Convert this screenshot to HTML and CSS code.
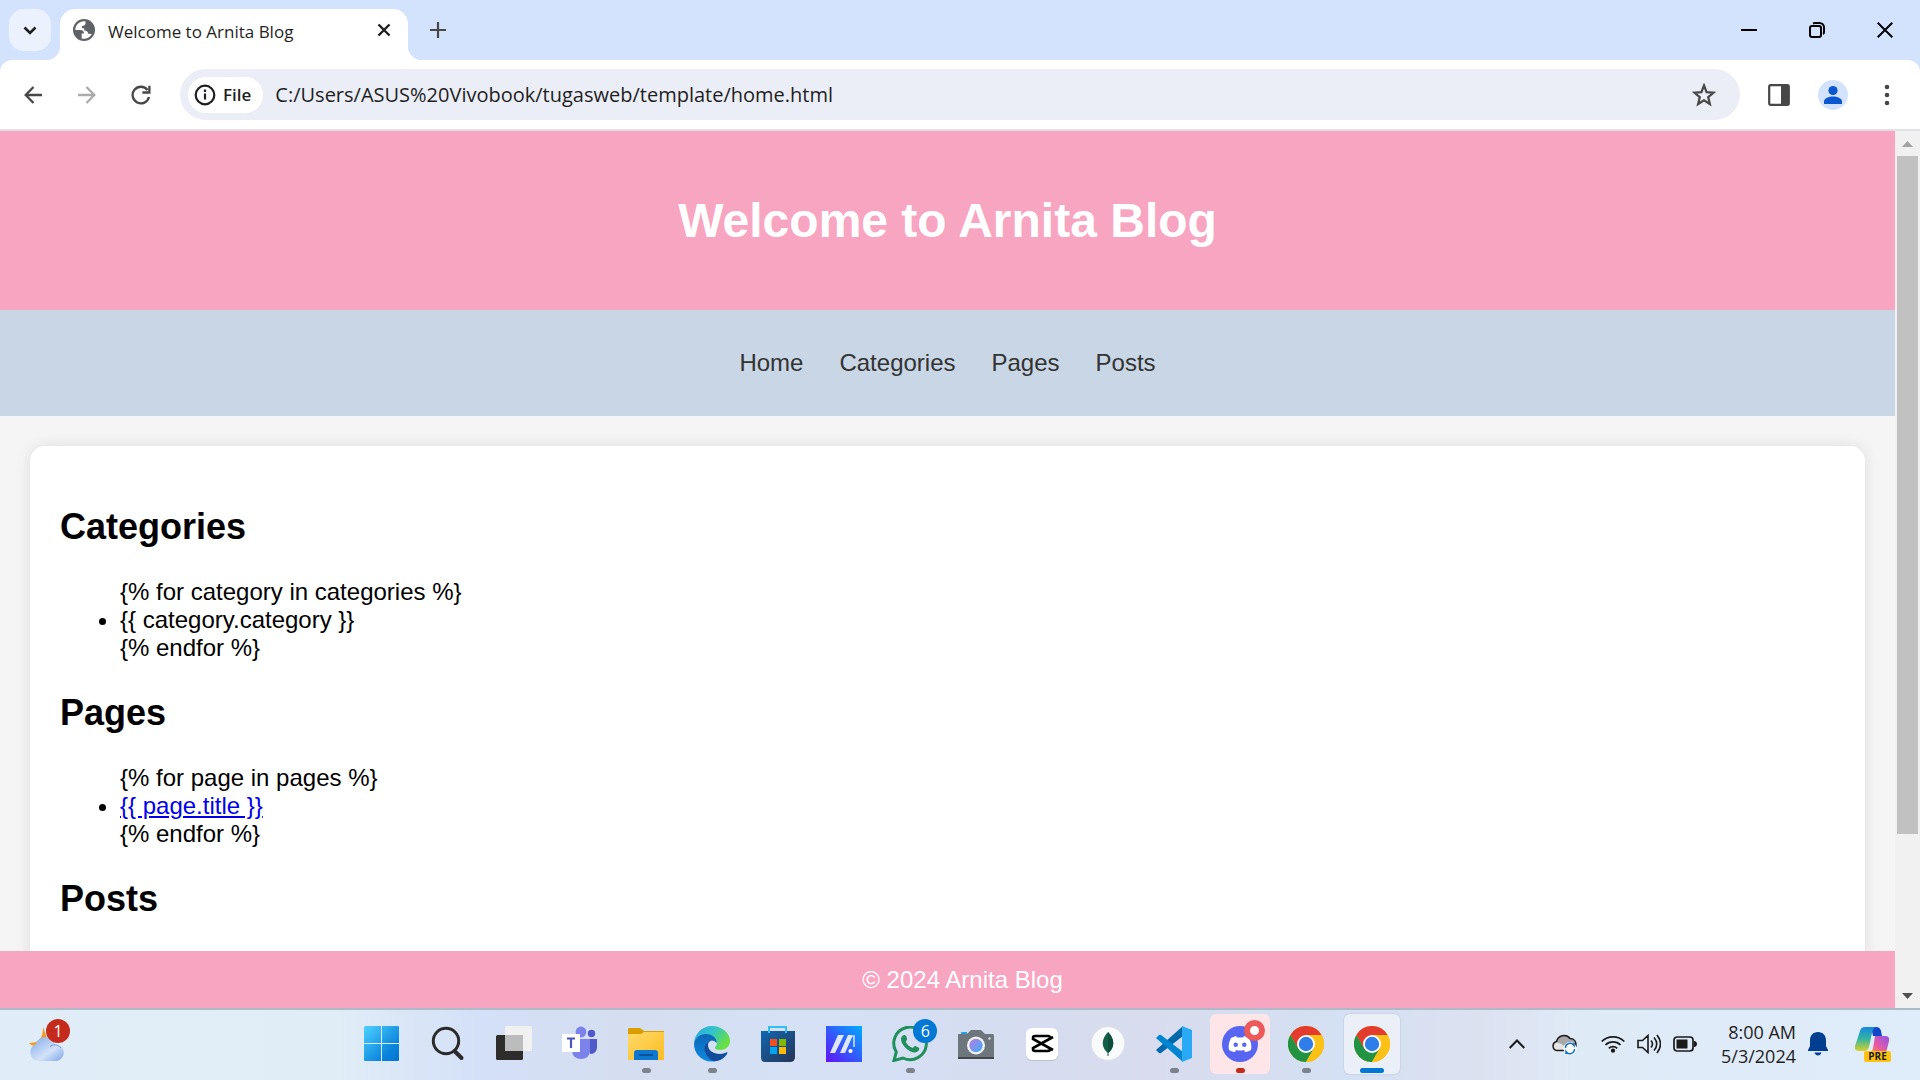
FILE: index.html
```html
<!DOCTYPE html>
<html lang="en">
<head>
<meta charset="utf-8">
<meta name="viewport" content="width=device-width, initial-scale=1">
<title>Welcome to Arnita Blog</title>
<link rel="stylesheet" href="styles.css">
</head>
<body>
<div class="tabstrip">
  <button class="tab-search" aria-label="Search tabs"><svg width="14" height="9" viewBox="0 0 14 9"><path d="M1.500 1.500 7 7l5.500-5.500" fill="none" stroke="#1f1f1f" stroke-width="2.600"/></svg></button>
  <div class="tab">
    <svg width="22" height="22" viewBox="0 0 22 22"><circle cx="11" cy="11" r="11" fill="#5f6368"/><path d="M12.500 2.400C7 1.600 2.400 5.700 2.300 11h5.200c2.200 0 3.600 1.300 3.600 3.400h-2.400v5c4 1 8.300-.8 10.100-4.500l-3.600-.2c-.2-2.300-1.700-3.100-4-3.100V9.200H8.900V6.900c2 0 3.400-.7 3.600-2.300z" fill="#fff"/><path d="M14.500 3.200c0 2.300.2 3.600-1.400 4.300v1.800c2.400.2 3.300 1.300 3.700 2.900h2.800c.5-3.900-1.600-7.600-5.100-9z" fill="#5f6368"/></svg>
    <span class="tab-title">Welcome to Arnita Blog</span>
    <button class="plain tab-close" aria-label="Close tab"><svg width="14" height="14" viewBox="0 0 14 14"><path d="m1.500 1.500 11 11m0-11-11 11" stroke="#1f1f1f" stroke-width="2.400"/></svg></button>
  </div>
  <button class="plain new-tab" aria-label="New tab"><svg width="16" height="16" viewBox="0 0 16 16"><path d="M8 0v16M0 8h16" stroke="#474747" stroke-width="2.200"/></svg></button>
  <div class="window-controls">
    <button class="plain" aria-label="Minimize"><svg width="16" height="16" viewBox="0 0 16 16"><path d="M0 8h16" stroke="#000" stroke-width="2"/></svg></button>
    <button class="plain" aria-label="Restore"><svg width="16" height="16" viewBox="0 0 16 16" fill="none" stroke="#000" stroke-width="2"><rect x="1" y="4" width="11" height="11" rx="2"/><path d="M4 1.500C5 1 5 1 6 1h4.500A4.500 4.500 0 0 1 15 5.500V10c0 1 0 1.500-1 2"/></svg></button>
    <button class="plain" aria-label="Close"><svg width="16" height="16" viewBox="0 0 16 16"><path d="m.700.700 14.600 14.600m0-14.600L.700 15.300" stroke="#000" stroke-width="2"/></svg></button>
  </div>
</div>

<div class="toolbar">
  <button class="plain tool" aria-label="Back"><svg width="18" height="18" viewBox="0 0 18 18" fill="none" stroke="#474747" stroke-width="2.300"><path d="M9.500 1 1.700 9l7.800 8M1.700 9H18"/></svg></button>
  <button class="plain tool" aria-label="Forward"><svg width="18" height="18" viewBox="0 0 18 18" fill="none" stroke="#ababab" stroke-width="2.300"><path d="m8.500 1 7.800 8-7.800 8M16.300 9H0"/></svg></button>
  <button class="plain tool" aria-label="Reload"><svg width="20" height="20" viewBox="0 0 20 20" fill="none" stroke="#474747" stroke-width="2.300"><path d="M16.500 5A8.300 8.300 0 1 0 18 12M18.400.700v6.800h-7"/></svg></button>
  <div class="omnibox">
    <button class="site-chip"><svg width="22" height="22" viewBox="0 0 22 22"><circle cx="11" cy="11" r="9.300" fill="none" stroke="#1f1f1f" stroke-width="2.200"/><path d="M11 9.500v6M11 5.500v2.400" stroke="#1f1f1f" stroke-width="2.200"/></svg>File</button>
    <input class="address" type="text" aria-label="Address" value="C:/Users/ASUS%20Vivobook/tugasweb/template/home.html">
    <button class="plain star" aria-label="Bookmark this page"><svg width="24" height="24" viewBox="0 0 24 24"><path d="m12 2.500 2.600 6.600 7 .5-5.400 4.500 1.700 6.900-5.900-3.700L6.100 21l1.700-6.900-5.400-4.500 7-.5z" fill="none" stroke="#474747" stroke-width="2.200"/></svg></button>
  </div>
  <button class="plain tool" aria-label="Side panel"><svg width="22" height="22" viewBox="0 0 22 22"><rect x="1.200" y="1.200" width="19.600" height="19.600" rx="1.500" fill="#fff" stroke="#474747" stroke-width="2.200"/><path d="M13 1h8v20h-8z" fill="#474747"/></svg></button>
  <button class="plain tool" aria-label="Profile"><svg width="30" height="30" viewBox="0 0 30 30"><circle cx="15" cy="15" r="15" fill="#d3e3fd"/><circle cx="15" cy="10.500" r="4.600" fill="#0b57d0"/><path d="M6 24v-2.500c0-3.200 5-5 9-5s9 1.800 9 5V24z" fill="#0b57d0"/></svg></button>
  <button class="plain tool" aria-label="Menu"><svg width="6" height="22" viewBox="0 0 6 22" fill="#474747"><circle cx="3" cy="3" r="2.300"/><circle cx="3" cy="11" r="2.300"/><circle cx="3" cy="19" r="2.300"/></svg></button>
</div>

<div class="viewport">
  <div class="blog">
    <header class="blog-header"><h1>Welcome to Arnita Blog</h1></header>
    <nav class="blog-nav">
      <a href="#home">Home</a>
      <a href="#categories">Categories</a>
      <a href="#pages">Pages</a>
      <a href="#posts">Posts</a>
    </nav>
    <main class="blog-body">
      <div class="card">
        <h2 id="categories">Categories</h2>
        <ul>
          {% for category in categories %}
          <li>{{ category.category }}</li>
          {% endfor %}
        </ul>
        <h2 id="pages">Pages</h2>
        <ul>
          {% for page in pages %}
          <li><a href="#page">{{ page.title }}</a></li>
          {% endfor %}
        </ul>
        <h2 id="posts">Posts</h2>
      </div>
    </main>
    <footer class="blog-footer">© 2024 Arnita Blog</footer>
  </div>
  <div class="scrollbar">
    <svg width="25" height="25" viewBox="0 0 25 25"><path d="m12.500 10 5.500 6H7z" fill="#a3a3a3"/></svg>
    <div class="track"><div class="thumb"></div></div>
    <svg width="25" height="25" viewBox="0 0 25 25"><path d="m12.500 16 5.500-6H7z" fill="#505050"/></svg>
  </div>
</div>

<div class="taskbar">
  <div class="widgets">
    <button class="plain weather" aria-label="Weather"><svg width="38" height="34" viewBox="0 0 38 34"><defs><linearGradient id="cl" x1="0" y1="0" x2="1" y2="1"><stop offset="0" stop-color="#7fa9ea"/><stop offset=".6" stop-color="#d3e2f8"/><stop offset="1" stop-color="#7ba4e8"/></linearGradient></defs><path d="M15 0c0 12-4 16-14 16 4 5 15 5 20 0z" fill="#f39a1e"/><path d="M9 34a9 9 0 0 1-1-17 10 10 0 0 1 19 0 8.600 8.600 0 0 1 2 17z" fill="url(#cl)"/><path d="M22 20c2-3 8-3 11 1" stroke="#6f99df" fill="none"/></svg><span class="badge alert">1</span></button>
  </div>
  <div class="apps">
    <button class="app" aria-label="Start"><svg width="36" height="36" viewBox="0 0 36 36"><defs><linearGradient id="win" x1="0" y1="0" x2="1" y2="1"><stop offset="0" stop-color="#4fd2ff"/><stop offset=".7" stop-color="#0c86dc"/><stop offset="1" stop-color="#0071d1"/></linearGradient></defs><path d="M1 0h16v17H0V1zM18 0h16q1 0 1 1v16H18zM0 18h17v17H1q-1 0-1-1zM18 18h17v16q0 1-1 1H18z" fill="url(#win)"/></svg></button>
    <button class="app" aria-label="Search"><svg width="36" height="36" viewBox="0 0 36 36" fill="none" stroke="#2b2b2b"><circle cx="16" cy="15" r="12.700" stroke-width="3"/><path d="m24.500 25 7 7" stroke-width="4" stroke-linecap="round"/></svg></button>
    <button class="app" aria-label="Task view"><svg width="36" height="36" viewBox="0 0 36 36"><rect x="0" y="9" width="27" height="25" rx="1.500" fill="#2e2d2c"/><rect x="9" y="0" width="27" height="25" rx="1.500" fill="#f1f1f1"/><path d="M9 9h18v16H9z" fill="#bcbcbc"/></svg></button>
    <button class="app" aria-label="Teams"><svg width="36" height="36" viewBox="0 0 36 36"><circle cx="19" cy="6" r="5.400" fill="#7b83eb"/><circle cx="29.500" cy="7.500" r="3.700" fill="#5059c9"/><path d="M24 13h11v9q-1 6-7 6z" fill="#5059c9"/><path d="M12 13h16v12q-1 8-9 8t-9-8z" fill="#7b83eb"/><path d="M0 8h18v18H0z" fill="#fff"/><path d="M5 12.500h8M9 12.500V22" stroke="#4b53bc" stroke-width="2.200"/></svg></button>
    <button class="app running" aria-label="File Explorer"><svg width="36" height="36" viewBox="0 0 36 36"><defs><linearGradient id="fo" x1="0" y1="0" x2="1" y2="1"><stop offset="0" stop-color="#ffda69"/><stop offset="1" stop-color="#fcbc23"/></linearGradient></defs><path d="M0 3q0-1 1-1h11l4 3h20v10H0z" fill="#dc9d00"/><path d="M0 8h13l3-2h20v28H0z" fill="url(#fo)"/><path d="M6 34v-7q0-3 3-3h18q3 0 3 3v7z" fill="#0c78d0"/><path d="M11 29h14" stroke="#0c529a" stroke-width="2"/></svg></button>
    <button class="app running" aria-label="Edge"><svg width="36" height="36" viewBox="0 0 36 36"><defs><linearGradient id="ed" x1="0" y1="0" x2="1" y2=".5"><stop offset="0" stop-color="#2ca3df"/><stop offset=".5" stop-color="#31c3cd"/><stop offset="1" stop-color="#69e040"/></linearGradient><linearGradient id="ee" x1="0" y1="0" x2="0" y2="1"><stop offset="0" stop-color="#0c65b6"/><stop offset="1" stop-color="#0c8be2"/></linearGradient></defs><path d="M0 18C0 8 8 0 18 0s18 7 18 15c0 6-5 9-10 9-3 0-5-1-5-2 0-2 2-2 2-5 0-4-4-7-9-7C7 10 1 13 0 18z" fill="url(#ed)"/><path d="M0 18C1 12 6 8 12 8c6 0 11 4 11 9l-3-2c-4-2-9 2-9 8 0 7 5 11 11 12-13 3-22-7-22-17z" fill="url(#ee)"/><path d="M18 14c-5 1-9 6-7 12s7 10 12 9c5-1 8-4 10-7 1-2 0-2-2-1-8 3-17-1-17-8 0-2 1-4 4-5z" fill="#114d9d"/></svg></button>
    <button class="app" aria-label="Microsoft Store"><svg width="36" height="36" viewBox="0 0 36 36"><defs><linearGradient id="st" x1="0" y1="0" x2="1" y2="1"><stop offset="0" stop-color="#0f67b4"/><stop offset="1" stop-color="#283455"/></linearGradient></defs><path d="M1 5h34v26q0 5-5 5H5q-4 0-4-5z" fill="url(#st)"/><path d="M9 7V1h17v6" fill="none" stroke="#33bff2" stroke-width="2"/><path d="M10 13h7v7h-7z" fill="#f25022"/><path d="M19 13h7v7h-7z" fill="#7fba00"/><path d="M10 21h7v7h-7z" fill="#00a4ef"/><path d="M19 21h7v7h-7z" fill="#ffb900"/></svg></button>
    <button class="app" aria-label="MyASUS"><svg width="36" height="36" viewBox="0 0 36 36"><defs><linearGradient id="as" x1="0" y1="1" x2="1" y2="0"><stop offset="0" stop-color="#6313f5"/><stop offset=".5" stop-color="#315cff"/><stop offset="1" stop-color="#00adff"/></linearGradient></defs><path d="M0 0h36v36H0z" fill="url(#as)"/><path d="M12 9h6L9 27H4zM22 9h5l-8 18h-5z" fill="#dfe6ff"/><path d="M25 9h4v12h-2v-9z" fill="#a8c8ff"/><circle cx="24.500" cy="25" r="2.100" fill="#fff"/></svg></button>
    <button class="app running" aria-label="WhatsApp"><svg width="36" height="36" viewBox="0 0 36 36"><path d="M2 34.500 4.300 26A16.300 16.300 0 1 1 11 32z" fill="none" stroke="#1f8f5b" stroke-width="3"/><path d="M11 9.500c2-1 3 0 3.500 1.500 1 2.600.5 3-.8 4.800 1.700 3.200 4 5.200 7 6.200 1.600-1.500 2-2.400 3.600-1.600 3 1.400 3.400 1.600 2.700 3.400-1 2.500-4 3-6 2.500C15 24.800 9 18 9 13c0-1.500.8-2.800 2-3.500z" fill="#1f8f5b"/></svg><span class="badge count">6</span></button>
    <button class="app" aria-label="Camera"><svg width="36" height="36" viewBox="0 0 36 36"><defs><linearGradient id="ca" x1="0" y1="0" x2="1" y2="1"><stop offset="0" stop-color="#b87be5"/><stop offset="1" stop-color="#3cb0f5"/></linearGradient></defs><path d="M3 8V7q0-1 1-1h5v3z" fill="#27a0e0"/><path d="M0 8h9l4-4h10l4 4h8q1 0 1 2v23H0z" fill="#6e767d"/><path d="M0 31h36v2H0z" fill="#42474c"/><circle cx="18" cy="19.500" r="9" fill="#f4f4f4"/><circle cx="18" cy="19.500" r="6.700" fill="url(#ca)"/><circle cx="31.500" cy="12.500" r="1.200" fill="#d6dadd"/></svg></button>
    <button class="app" aria-label="CapCut"><svg width="36" height="36" viewBox="0 0 36 36"><rect x="2" y="3" width="32" height="32" rx="6" fill="#a9afb9" opacity=".6"/><rect x="2" y="2" width="32" height="32" rx="6" fill="#fff"/><path d="M29 11 9 22v1q0 2 2 2h13q2 0 2-2M29 24 9 13v-1q0-2 2-2h13q2 0 2 2" fill="none" stroke="#000" stroke-width="2.600"/></svg></button>
    <button class="app" aria-label="MongoDB Compass"><svg width="36" height="36" viewBox="0 0 36 36"><circle cx="18" cy="17.500" r="16.700" fill="#f9fbfa" stroke="#e1e4e8"/><path d="M18 6c7 7 7 16 0 21-7-5-7-14 0-21z" fill="#116149"/><path d="M18 6c7 7 7 16 0 21z" fill="#0d4f3c"/><path d="M18 25v5" stroke="#116149"/></svg></button>
    <button class="app running" aria-label="Visual Studio Code"><svg width="36" height="36" viewBox="0 0 36 36"><path d="m0 24 3 3q1 .500 2 0L27 10V0z" fill="#0069ac"/><path d="m0 12 3-3q1-.500 2 0l22 17v10z" fill="#0086d1"/><path d="M26 0 36 4v28l-10 4z" fill="#2aa9f4"/></svg></button>
    <button class="app tile-alert running" aria-label="Discord"><svg width="36" height="36" viewBox="0 0 36 36"><circle cx="18" cy="18" r="18" fill="#5865f2"/><path d="m14 10-5 2c-2 4-3 8-2 12 2 1 4 2 6 2l1-2c3 .700 5 .700 8 0l1 2c2 0 4-1 6-2 1-4 0-8-2-12l-5-2-1 1.500h-6z" fill="#fff"/><circle cx="13.700" cy="18.700" r="2.200" fill="#5865f2"/><circle cx="22.300" cy="18.700" r="2.200" fill="#5865f2"/></svg><span class="badge dot"></span></button>
    <button class="app running" aria-label="Chrome"><svg width="36" height="36" viewBox="0 0 36 36"><g id="chrome"><circle cx="18" cy="18" r="18" fill="#fbc116"/><path d="M2.400 9A18 18 0 0 1 33.600 9H18l-8 13.500z" fill="#e33b2e"/><path d="M2.400 9A18 18 0 0 0 18 36l7.800-13.500-15.600 0z" fill="#229342"/><path d="M18 9h15.600A18 18 0 0 1 18 36l7.800-13.500z" fill="#fbc116"/><circle cx="18" cy="18" r="9" fill="#fff"/><circle cx="18" cy="18" r="7.200" fill="#2f7de9"/></g></svg></button>
    <button class="app tile-active running" aria-label="Chrome, active window"><svg width="36" height="36" viewBox="0 0 36 36"><use href="#chrome"/></svg></button>
  </div>
  <div class="tray">
    <button class="plain overflow" aria-label="Hidden icons"><svg width="16" height="10" viewBox="0 0 16 10"><path d="m.700 9 7.300-7.500L15.300 9" fill="none" stroke="#1b1b1b" stroke-width="2"/></svg></button>
    <button class="plain cloud" aria-label="OneDrive"><svg width="25" height="21" viewBox="0 0 25 21"><path d="M5 16.500A4.600 4.600 0 0 1 4.500 7.500 7.700 7.700 0 0 1 18 4.500c4 0 6 3 6 6s-2 6-5 6z" fill="#a8a8a8" stroke="#1b1b1b" stroke-width="1.500"/><path d="M5 15.500c-4 0-4-6 0-7 3 0 9 4 10 7z" fill="#e4e4e4"/><circle cx="18" cy="14.500" r="6.500" fill="#fff"/><path d="M13.500 14a4.600 4.600 0 0 1 8.500-2.500V9M22.500 15a4.600 4.600 0 0 1-8.500 2.500V20" fill="none" stroke="#0f73c9" stroke-width="1.500"/></svg></button>
    <button class="plain status" aria-label="Network, volume and battery">
      <svg width="24" height="18" viewBox="0 0 24 18" fill="none" stroke="#1b1b1b" stroke-width="1.700"><path d="M.700 6.500a16 16 0 0 1 22.600 0M4.500 10a10.700 10.700 0 0 1 15 0M7.800 13.300a6 6 0 0 1 8.400 0"/><circle cx="12" cy="15.700" r="1.300" fill="#1b1b1b"/></svg>
      <svg width="24" height="20" viewBox="0 0 24 20" fill="none" stroke="#1b1b1b" stroke-width="1.600"><path d="M1 6.500h4.500L11 1.500v17l-5.500-5H1zM14 6.500q3 3.500 0 7M17 3.500q5.500 6.500 0 13M20 1q7 9 0 18"/></svg>
      <svg width="24" height="16" viewBox="0 0 24 16"><rect x="1" y="1" width="19" height="14" rx="3" fill="none" stroke="#1b1b1b" stroke-width="1.700"/><path d="M3.500 3.500h11v9h-11z" fill="#1b1b1b"/><path d="M21 5c4 0 4 6 0 6z" fill="#1b1b1b"/></svg>
    </button>
    <button class="plain clock"><span>8:00 AM</span><span>5/3/2024</span></button>
    <button class="plain bell" aria-label="Notifications"><svg width="20" height="24" viewBox="0 0 20 24" fill="#003e92"><path d="M10 0c5 0 8 3.500 8 8.500V14l2 4v1H0v-1l2-4V8.500C2 3.500 5 0 10 0zM6.500 20.500h7q-1 3-3.500 3t-3.500-3z"/></svg></button>
    <button class="plain copilot" aria-label="Copilot"><svg width="35" height="34" viewBox="0 0 35 34"><defs><linearGradient id="co" x1="0" y1="0" x2="0" y2="1"><stop offset="0" stop-color="#1687e0"/><stop offset=".5" stop-color="#35b5a0"/><stop offset="1" stop-color="#d9cf28"/></linearGradient><linearGradient id="cp" x1="1" y1="0" x2="0" y2="1"><stop offset="0" stop-color="#8c53f0"/><stop offset=".6" stop-color="#ee5a9b"/><stop offset="1" stop-color="#f5a04c"/></linearGradient></defs><path d="M16 0h5q4 0 5 4l1 5h-9z" fill="#1246c8"/><path d="M10 0h11q-3 1-4 6l-3 14q-1 4-5 4H4q-5 0-4-5L5 4q1-4 5-4z" fill="url(#co)"/><path d="M20 9h10q5 0 4 5l-2 8q-1 5-6 5H14q3-1 4-6z" fill="url(#cp)"/></svg><span class="pre">PRE</span></button>
  </div>
</div>
</body>
</html>
```
FILE: styles.css
```css
* {
  box-sizing: border-box;
}

body {
  margin: 0;
  height: 100vh;
  display: flex;
  flex-direction: column;
  overflow: hidden;
  background: #d3e3fd;
  font-family: "Open Sans", "Noto Sans", sans-serif;
  color: #1f1f1f;
}

button {
  font: inherit;
  color: inherit;
}

svg {
  display: block;
  flex: none;
}

.plain,
.app {
  position: relative;
  display: flex;
  align-items: center;
  justify-content: center;
  padding: 0;
  border: 0;
  background: none;
}

/* Tab strip */
.tabstrip {
  display: flex;
  height: 60px;
  flex: none;
  padding: 9px 1px 0 9px;
}

.tab-search {
  display: flex;
  align-items: center;
  justify-content: center;
  width: 42px;
  height: 42px;
  padding: 0;
  border: 0;
  border-radius: 15px;
  background: #ebf2fe;
}

.tab {
  position: relative;
  display: flex;
  align-items: center;
  gap: 13px;
  width: 348px;
  margin-left: 9px;
  padding: 0 17px 9px 13px;
  border-radius: 15px 15px 0 0;
  background: #fff;
}

.tab::before,
.tab::after {
  content: "";
  position: absolute;
  bottom: 0;
  width: 15px;
  height: 15px;
}

.tab::before {
  right: 100%;
  background: radial-gradient(circle at 0 0, transparent 15px, #fff 16px);
}

.tab::after {
  left: 100%;
  background: radial-gradient(circle at 100% 0, transparent 15px, #fff 16px);
}

.tab-title {
  flex: 1;
  font-size: 17px;
  line-height: 24px;
  padding-top: 3px;
  white-space: nowrap;
}

.new-tab {
  width: 42px;
  height: 42px;
  margin-left: 9px;
}

.window-controls {
  display: flex;
  height: 42px;
  margin-left: auto;
}

.window-controls .plain {
  width: 68px;
}

/* Toolbar */
.toolbar {
  display: flex;
  align-items: center;
  flex: none;
  gap: 12px;
  height: 71px;
  padding: 0 12px;
  border-bottom: 2px solid #dfe1e5;
  border-radius: 12px 12px 0 0;
  background: #fff;
}

.tool {
  width: 42px;
  height: 42px;
}

.omnibox {
  display: flex;
  align-items: center;
  flex: 1;
  height: 51px;
  margin: 0 6px;
  padding: 0 24px 0 8px;
  border-radius: 26px;
  background: #ebeef7;
}

.site-chip {
  display: flex;
  align-items: center;
  gap: 7px;
  height: 36px;
  padding: 0 12px 0 6px;
  border: 0;
  border-radius: 18px;
  background: #fff;
  font-size: 17px;
  font-weight: 600;
}

.address {
  flex: 1;
  min-width: 0;
  height: 36px;
  margin-left: 12px;
  padding: 0;
  border: 0;
  outline: 0;
  background: none;
  font: 20px "Open Sans", "Noto Sans", sans-serif;
  color: #1f1f1f;
}

/* Page area */
.viewport {
  display: flex;
  flex: 1;
  min-height: 0;
}

.blog {
  display: flex;
  flex-direction: column;
  flex: 1;
  min-width: 0;
  background: #f5f5f5;
  font: 24px/28px Arial, "Liberation Sans", sans-serif;
  color: #000;
}

.blog-header {
  padding: 30px;
  background: #f8a5c2;
  color: #fff;
  text-align: center;
}

.blog-header h1 {
  margin: 32px 0;
  font-size: 48px;
  line-height: 55px;
}

.blog-nav {
  display: flex;
  justify-content: center;
  gap: 36px;
  padding: 39px 15px;
  background: #c8d6e5;
}

.blog-nav a {
  color: #333;
  text-decoration: none;
}

.blog-body {
  flex: 1;
  min-height: 0;
  overflow: hidden;
  padding: 30px;
}

.card {
  min-height: 720px;
  padding: 30px;
  border-radius: 15px;
  background: #fff;
  box-shadow: 0 0 15px rgba(0, 0, 0, 0.1);
}

.card h2 {
  margin: 30px 0;
  font-size: 36px;
  line-height: 42px;
}

.card ul {
  margin: 30px 0;
  padding-left: 60px;
}

.card a {
  color: #0000ee;
}

.blog-footer {
  padding: 15px 15px 14px 45px;
  background: #f8a5c2;
  color: #fff;
  text-align: center;
}

.scrollbar {
  display: flex;
  flex-direction: column;
  width: 25px;
  background: #f1f1f1;
}

.track {
  flex: 1;
  padding: 0 2px;
}

.thumb {
  height: 82%;
  background: #c1c1c1;
}

/* Taskbar */
.taskbar {
  display: flex;
  flex: none;
  height: 72px;
  padding-bottom: 2px;
  border-top: 2px solid #b0bac6;
  background: linear-gradient(90deg, #e0edf8 0%, #e1edf6 17%, #d4e0f7 25%, #d5def0 33%, #d6e1f6 42%, #d5ddf0 52%, #d8dcee 60%, #d4e0f3 70%, #dce1f0 77%, #dfeaf7 82%, #dfecf9 100%);
}

.widgets {
  flex: 320 1 0;
  display: flex;
  align-items: center;
  padding-left: 28px;
}

.weather {
  height: 36px;
}

.badge {
  position: absolute;
  display: flex;
  align-items: center;
  justify-content: center;
  width: 24px;
  height: 24px;
  border-radius: 50%;
  color: #fff;
  font-size: 16px;
  line-height: 24px;
}

.alert {
  top: -7px;
  left: 18px;
  background: #c42b1c;
}

.apps {
  display: flex;
  align-items: center;
}

.app {
  width: 60px;
  height: 60px;
  margin: 0 3px;
  border-radius: 6px;
}

.running::after {
  content: "";
  position: absolute;
  bottom: 1px;
  left: 26px;
  width: 9px;
  height: 5px;
  border-radius: 3px;
  background: #7d838d;
}

.count {
  top: 5px;
  right: 3px;
  background: #0078d4;
}

.dot {
  top: 6px;
  right: 5px;
  width: 21px;
  height: 21px;
  border: 6px solid #ee5a5a;
  background: #fff;
}

.tile-alert {
  background: #fde5e8;
}

.tile-alert::after {
  background: #c42b1c;
}

.tile-active {
  width: 56px;
  margin: 0 5px;
  background: #ebeff8;
  box-shadow: 0 0 2px #b4bccb;
}

.tile-active::after {
  left: 16px;
  width: 24px;
  background: #0078d4;
}

.tray {
  flex: 483 1 0;
  display: flex;
  align-items: center;
  justify-content: flex-end;
  padding-right: 30px;
}

.cloud {
  margin-left: 27px;
}

.status {
  gap: 12px;
  margin-left: 24px;
}

.clock {
  flex-direction: column;
  align-items: flex-end;
  width: 86px;
  margin-left: 13px;
  font-size: 18px;
  line-height: 24px;
}

.bell {
  margin-left: 12px;
}

.copilot {
  margin-left: 27px;
}

.pre {
  position: absolute;
  right: -1px;
  bottom: -1px;
  width: 27px;
  border-radius: 2px;
  background: #ffc20e;
  color: #1b1b1b;
  font-size: 10px;
  font-weight: 700;
  line-height: 11px;
}
```
